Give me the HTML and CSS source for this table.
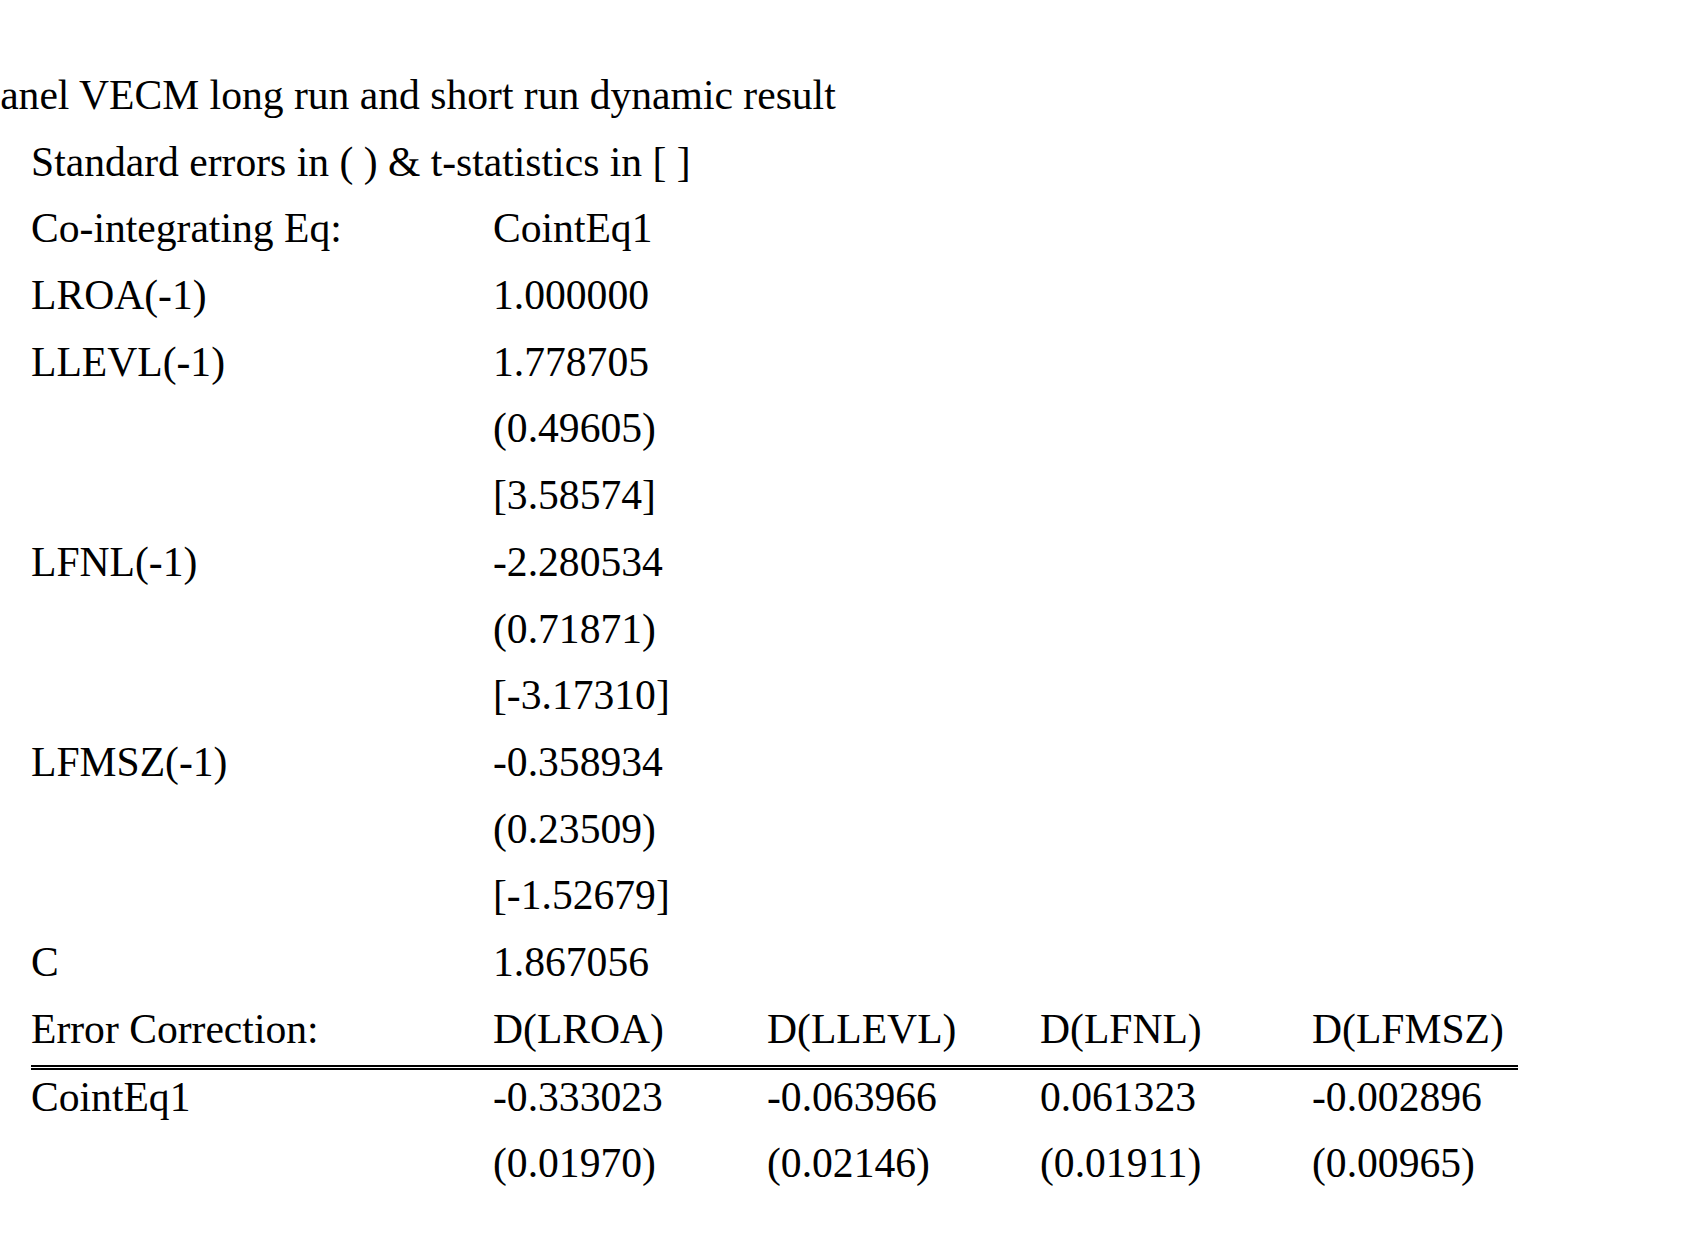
FILE: index.html
```html
<!DOCTYPE html>
<html lang="en">
<head>
<meta charset="utf-8">
<title>Panel VECM long run and short run dynamic result</title>
<link rel="stylesheet" href="styles.css">
</head>
<body>
<div class="page">
  <h1 class="title">Panel VECM long run and short run dynamic result</h1>
  <div class="results">
    <div class="row"><span class="cell wide">Standard errors in ( ) &amp; t-statistics in [ ]</span></div>
    <div class="row"><span class="cell">Co-integrating Eq:</span><span class="cell">CointEq1</span></div>
    <div class="row"><span class="cell">LROA(-1)</span><span class="cell">1.000000</span></div>
    <div class="row"><span class="cell">LLEVL(-1)</span><span class="cell">1.778705</span></div>
    <div class="row"><span class="cell"></span><span class="cell">(0.49605)</span></div>
    <div class="row"><span class="cell"></span><span class="cell">[3.58574]</span></div>
    <div class="row"><span class="cell">LFNL(-1)</span><span class="cell">-2.280534</span></div>
    <div class="row"><span class="cell"></span><span class="cell">(0.71871)</span></div>
    <div class="row"><span class="cell"></span><span class="cell">[-3.17310]</span></div>
    <div class="row"><span class="cell">LFMSZ(-1)</span><span class="cell">-0.358934</span></div>
    <div class="row"><span class="cell"></span><span class="cell">(0.23509)</span></div>
    <div class="row"><span class="cell"></span><span class="cell">[-1.52679]</span></div>
    <div class="row"><span class="cell">C</span><span class="cell">1.867056</span></div>
    <div class="row"><span class="cell">Error Correction:</span><span class="cell">D(LROA)</span><span class="cell">D(LLEVL)</span><span class="cell">D(LFNL)</span><span class="cell">D(LFMSZ)</span></div>
    <div class="rule"></div>
    <div class="row first"><span class="cell">CointEq1</span><span class="cell">-0.333023</span><span class="cell">-0.063966</span><span class="cell">0.061323</span><span class="cell">-0.002896</span></div>
    <div class="row"><span class="cell"></span><span class="cell">(0.01970)</span><span class="cell">(0.02146)</span><span class="cell">(0.01911)</span><span class="cell">(0.00965)</span></div>
  </div>
</div>
</body>
</html>
```

FILE: styles.css
```css
html, body {
  margin: 0;
  padding: 0;
  background: #ffffff;
}

body {
  font-family: "Liberation Serif", "Times New Roman", serif;
  font-size: 41.6px;
  color: #000000;
  overflow: hidden;
}

.page {
  padding-top: 62px;
  padding-left: 31px;
  width: 1657px;
  box-sizing: border-box;
}

.title {
  margin: 0 0 0 -54px;
  font-size: 41.6px;
  font-weight: normal;
  line-height: 66.7px;
  white-space: nowrap;
}

.results {
  width: 1487px;
}

.row {
  display: grid;
  grid-template-columns: 462px 274px 273px 272px 1fr;
  line-height: 66.7px;
  height: 66.7px;
  white-space: nowrap;
}

.cell.wide {
  grid-column: 1 / -1;
}

.rule {
  margin-top: 3px;
  height: 1px;
  border-top: 2px solid #000000;
  border-bottom: 2px solid #000000;
}

.row.first {
  line-height: 54px;
  height: 54px;
  padding-bottom: 6px;
}
```
